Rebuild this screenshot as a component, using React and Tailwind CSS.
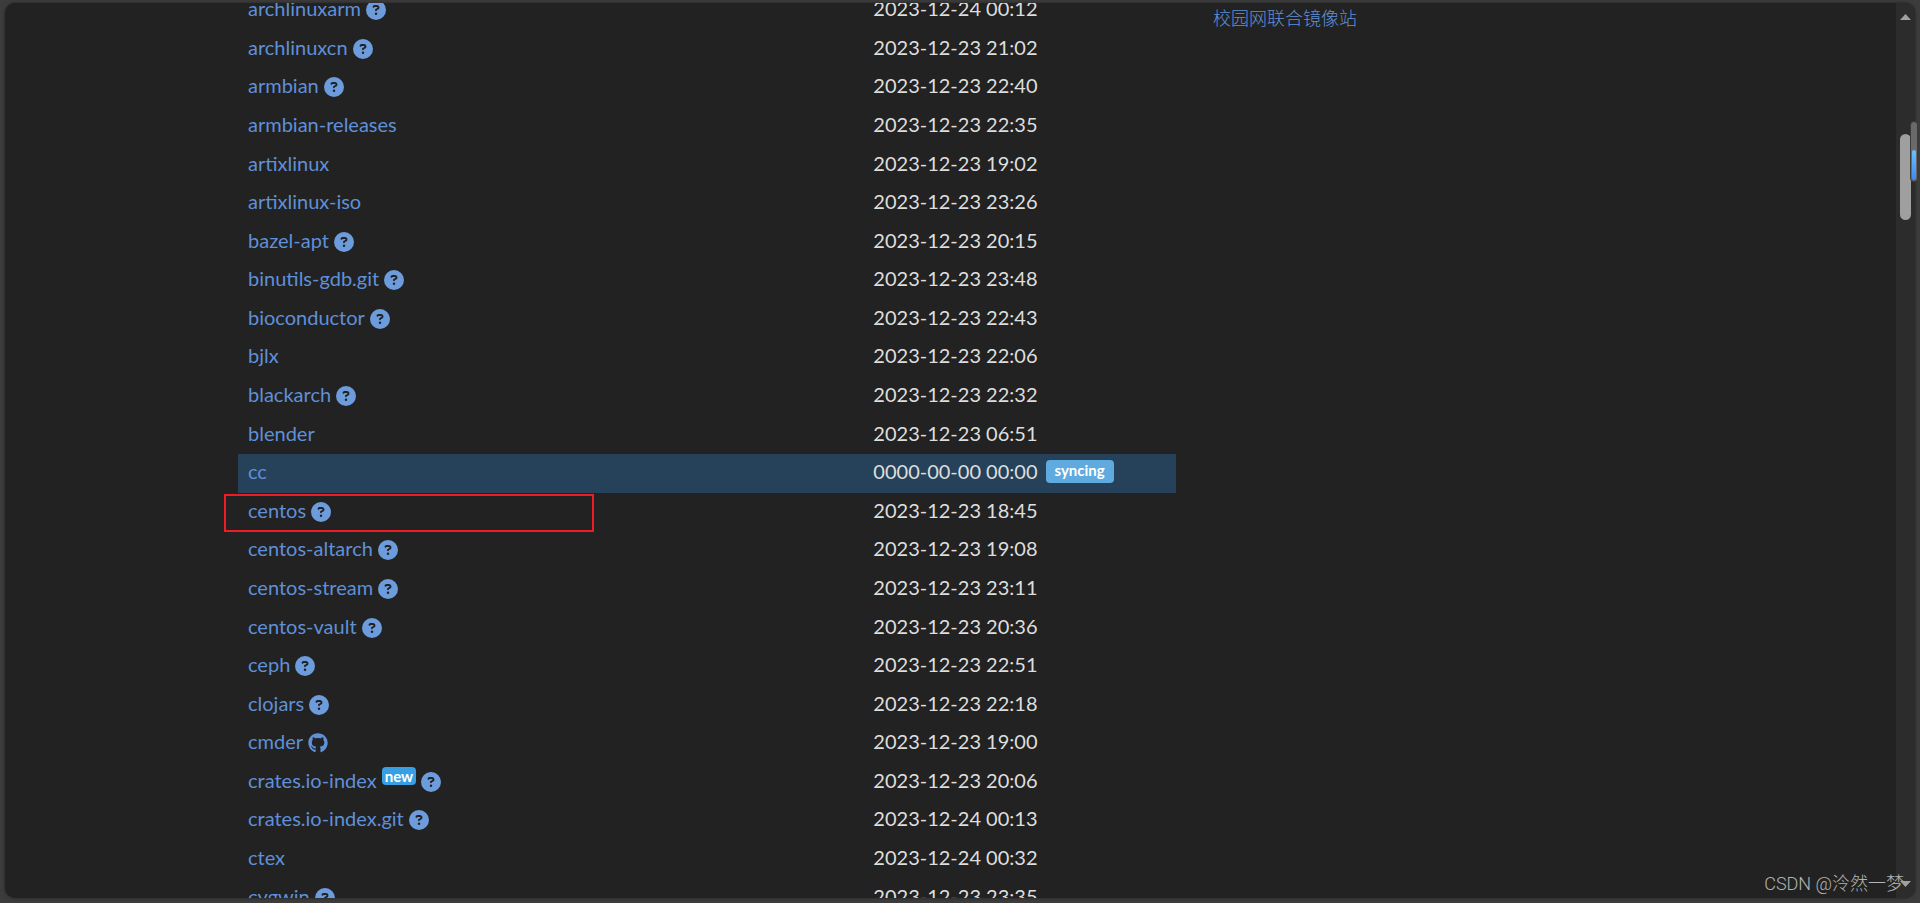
import { FaCircleQuestion, FaGithub } from "react-icons/fa6";

const mirrors = [
  { name: "archlinuxarm", time: "2023-12-24 00:12", help: true },
  { name: "archlinuxcn", time: "2023-12-23 21:02", help: true },
  { name: "armbian", time: "2023-12-23 22:40", help: true },
  { name: "armbian-releases", time: "2023-12-23 22:35" },
  { name: "artixlinux", time: "2023-12-23 19:02" },
  { name: "artixlinux-iso", time: "2023-12-23 23:26" },
  { name: "bazel-apt", time: "2023-12-23 20:15", help: true },
  { name: "binutils-gdb.git", time: "2023-12-23 23:48", help: true },
  { name: "bioconductor", time: "2023-12-23 22:43", help: true },
  { name: "bjlx", time: "2023-12-23 22:06" },
  { name: "blackarch", time: "2023-12-23 22:32", help: true },
  { name: "blender", time: "2023-12-23 06:51" },
  { name: "cc", time: "0000-00-00 00:00", syncing: true },
  { name: "centos", time: "2023-12-23 18:45", help: true, marked: true },
  { name: "centos-altarch", time: "2023-12-23 19:08", help: true },
  { name: "centos-stream", time: "2023-12-23 23:11", help: true },
  { name: "centos-vault", time: "2023-12-23 20:36", help: true },
  { name: "ceph", time: "2023-12-23 22:51", help: true },
  { name: "clojars", time: "2023-12-23 22:18", help: true },
  { name: "cmder", time: "2023-12-23 19:00", github: true },
  { name: "crates.io-index", time: "2023-12-23 20:06", fresh: true, help: true },
  { name: "crates.io-index.git", time: "2023-12-24 00:13", help: true },
  { name: "ctex", time: "2023-12-24 00:32" },
  { name: "cygwin", time: "2023-12-23 23:35", help: true },
];

function MirrorRow({ mirror }) {
  return (
    <tr className={mirror.syncing ? "bg-[#26425a]" : ""}>
      <td className="relative w-2/3 px-[10px] pt-0 pb-1">
        <div className="flex items-center gap-[5px]">
          <a href="#mirror" className="text-[#5f90d8]">{mirror.name}</a>
          {mirror.fresh && (
            <span className="mb-2 rounded-sm bg-[#389fe5] px-[3px] text-[15px] leading-[18px] font-bold text-white">new</span>
          )}
          {mirror.help && (
            <a href="#help" aria-label={`${mirror.name} help`} className="mt-1 text-[#6d9cdd]">
              <FaCircleQuestion />
            </a>
          )}
          {mirror.github && (
            <a href="#github" aria-label={`${mirror.name} on GitHub`} className="mt-1 text-[#5f90d8]">
              <FaGithub />
            </a>
          )}
        </div>
        {mirror.marked && (
          <div className="pointer-events-none absolute top-px -bottom-px -left-[14px] w-[370px] border-2 border-[#ee1c24]" />
        )}
      </td>
      <td className="px-[10px] pt-0 pb-1">
        <div className="flex items-center gap-2">
          <span>{mirror.time}</span>
          {mirror.syncing && (
            <span className="rounded-sm bg-[#5faade] px-[9px] pb-[3px] text-[15px] leading-5 font-bold text-white">syncing</span>
          )}
        </div>
      </td>
    </tr>
  );
}

function ScrollTrack() {
  return (
    <div className="flex w-[19px] shrink-0 flex-col items-start bg-[#2c2c2c] py-[11px] pl-1">
      <svg className="h-[6px] w-[11px]" viewBox="0 0 11 6" fill="#a0a0a0"><path d="M5.5 0 11 6H0z" /></svg>
      <div className="mt-[114px] h-[86px] w-[11px] rounded-full bg-[#9f9f9f]" />
      <svg className="mt-auto h-[6px] w-[11px]" viewBox="0 0 11 6" fill="#a0a0a0"><path d="M5.5 6 0 0h11z" /></svg>
    </div>
  );
}

export default function App() {
  return (
    <div className="relative h-screen overflow-hidden bg-[#3c3c3c] pt-[3px] pr-[5px] pb-[5px] pl-[5px] font-['Lato','Noto_Sans_CJK_SC',sans-serif] text-xl leading-[30px] text-[#dedede]">
      <div className="flex h-full overflow-hidden rounded-[10px] bg-[#222222] shadow-[0_0_3px_#222222]">
        <main className="h-full flex-1 overflow-hidden pr-[3px]">
          <div className="mx-auto -mt-3 flex max-w-[1452px] items-start">
            <section className="w-2/3 px-[15px]">
              <table className="h-[926px] w-full border-collapse">
                <tbody>
                  {mirrors.map((m) => (
                    <MirrorRow key={m.name} mirror={m} />
                  ))}
                </tbody>
              </table>
            </section>
            <aside className="w-1/3 px-[22px] pt-3">
              <a href="#union" className="block text-lg leading-[30px] font-light text-[#5f90d8]">校园网联合镜像站</a>
            </aside>
          </div>
        </main>
        <ScrollTrack />
      </div>
      <div className="absolute top-[121px] right-[2px] h-[61px] w-[8px] rounded-full border border-[#3a3a3a] bg-[#6a6a6a]">
        <div className="mx-auto mt-[28px] h-[30px] w-[4px] rounded-full bg-linear-to-b from-[#6cc0fa] to-[#3f88f4]" />
      </div>
      <div className="absolute right-[16px] bottom-[7px] font-['Roboto','Noto_Sans_CJK_SC',sans-serif] text-lg leading-6 font-light text-[#b4b4b4]">CSDN @泠然一梦</div>
    </div>
  );
}
